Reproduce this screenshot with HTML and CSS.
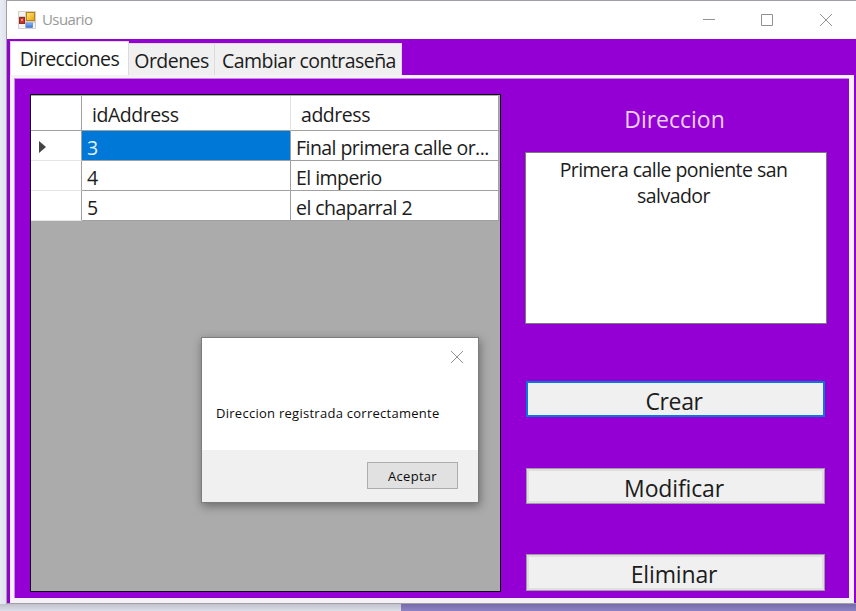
FILE: index.html
```html
<!DOCTYPE html>
<html lang="es">
<head>
<meta charset="utf-8">
<title>Usuario</title>
<link rel="stylesheet" href="styles.css">
</head>
<body>
<main class="window">
  <header class="titlebar">
    <svg class="app-icon" width="18" height="18" viewBox="0 0 18 18">
      <defs>
        <linearGradient id="gold" x1="0" y1="0" x2="1" y2="1"><stop offset="0" stop-color="#ffe58a"/><stop offset="1" stop-color="#e9a800"/></linearGradient>
        <linearGradient id="blue" x1="0" y1="0" x2="0" y2="1"><stop offset="0" stop-color="#8fbcff"/><stop offset="1" stop-color="#2c6fdc"/></linearGradient>
      </defs>
      <rect width="18" height="18" rx="1" fill="#d3cfcb"/>
      <rect x="1" y="1" width="6" height="4" fill="#f3f3f3"/>
      <rect x="1" y="13" width="6" height="4" fill="#f3f3f3"/>
      <rect x="15" y="12" width="2" height="5" fill="#f3f3f3"/>
      <rect x="1.5" y="6.500" width="5" height="6" fill="#c7382c" stroke="#962a24"/>
      <rect x="3" y="8" width="2" height="2" fill="#f08a76"/>
      <rect x="8.500" y="1.500" width="8" height="8" fill="url(#gold)" stroke="#b98212"/>
      <rect x="8" y="12" width="6.500" height="4.500" fill="url(#blue)" stroke="#5280c8" stroke-width=".6"/>
    </svg>
    <span class="title">Usuario</span>
    <div class="controls">
      <svg width="12" height="12" viewBox="0 0 12 12"><path d="M0 5.500H12"/></svg>
      <svg width="12" height="12" viewBox="0 0 12 12"><path d="M.5.5h11v11H.5z"/></svg>
      <svg width="12" height="12" viewBox="0 0 12 12"><path d="M0 0L12 12M12 0L0 12"/></svg>
    </div>
  </header>
  <div class="client">
    <nav class="tabs">
      <span class="tab active">Direcciones</span>
      <span class="tab ord">Ordenes</span>
      <span class="tab pass">Cambiar contraseña</span>
    </nav>
    <section class="page">
      <div class="grid-box">
        <div class="grid">
          <div class="cell head"></div><div class="cell head h-id">idAddress</div><div class="cell head">address</div>
          <div class="cell rowhead"><svg width="7" height="12" viewBox="0 0 7 12"><path d="M0 0L7 6L0 12z"/></svg></div><div class="cell selected">3</div><div class="cell">Final primera calle or...</div>
          <div class="cell rowhead"></div><div class="cell">4</div><div class="cell">El imperio</div>
          <div class="cell rowhead"></div><div class="cell">5</div><div class="cell">el chaparral 2</div>
        </div>
      </div>
      <aside class="form">
        <div class="label">Direccion</div>
        <div class="textbox">Primera calle poniente san<br>salvador</div>
        <div class="button primary">Crear</div>
        <div class="button">Modificar</div>
        <div class="button">Eliminar</div>
      </aside>
    </section>
  </div>
</main>
<div class="desktop"><div class="taskstrip"></div></div>
<div class="dialog">
  <div class="dialog-body">
    <svg class="dialog-close" width="12" height="12" viewBox="0 0 12 12"><path d="M0 0L12 12M12 0L0 12"/></svg>
    <span class="message">Direccion registrada correctamente</span>
  </div>
  <div class="dialog-foot"><div class="accept">Aceptar</div></div>
</div>
</body>
</html>
```
FILE: styles.css
```css
* { box-sizing: border-box; }
body {
  margin: 0;
  width: 856px;
  height: 611px;
  overflow: hidden;
  position: relative;
  background: linear-gradient(90deg, #e8ecf5, #dfe2eb 6px);
  font-family: "Open Sans", "Noto Sans", sans-serif;
  font-size: 19.5px;
  letter-spacing: -.55px;
  color: #1c1c1c;
  white-space: nowrap;
}
.window {
  width: 850px;
  height: 604px;
  margin-left: 6px;
  border: 1px solid #a2a0a6;
  border-right: 0;
  background: #fff;
}
.titlebar {
  display: flex;
  align-items: center;
  height: 38px;
  padding: 0 24px 0 11px;
}
.title { margin: -2px 0 0 6px; color: #999; font-size: 15px; letter-spacing: -.6px; }
.controls { display: flex; gap: 47px; margin-left: auto; }
.controls svg, .dialog-close { fill: none; stroke: #929292; stroke-width: 1; }
.controls svg:first-child { margin-right: -1px; }
.client { height: 564px; padding: 2px 2px 0 3px; background: #9400d3; }
.tabs { display: flex; align-items: flex-end; height: 34px; }
.tab {
  display: flex;
  align-items: center;
  justify-content: center;
  height: 32px;
  background: #f0f0f0;
  border: 1px solid #dcdcdc;
  border-bottom: 0;
}
.tab.active { width: 119px; height: 34px; background: #fff; padding-bottom: 1px; }
.tab.ord { width: 86px; border-left: 0; padding-top: 1px; }
.tab.pass { width: 187px; border-left: 0; padding: 1px 0 0 2px; }
.page {
  display: flex;
  height: 528px;
  border: solid #f4f2f6;
  border-width: 3px 5px 5px 4px;
  box-shadow: inset 0 1px #c98ae6, inset 1px 0 #c98ae6;
  background: #9400d3;
}
.grid-box {
  width: 471px;
  height: 498px;
  margin: 16px 24px 0 16px;
  border: 1px solid #100c14;
  background: #ababab;
  padding: 1px 1px 0 0;
}
.grid {
  display: grid;
  grid-template-columns: 51px 209px 208px;
  grid-template-rows: 35px 30px 30px 30px;
}
.cell {
  display: flex;
  align-items: center;
  padding: 4px 0 0 5px;
  background: #fff;
  border-right: 1px solid #a0a0a0;
  border-bottom: 1px solid #a0a0a0;
  overflow: hidden;
}
.head { padding-top: 2px; padding-left: 10px; letter-spacing: -.45px; }
.h-id { border-right-color: #e3e3e3; }
.rowhead { border-bottom-color: #e5e5e5; padding: 2px 0 0 8px; fill: #444; }
.selected { background: #0078d7; color: #e4f0fa; }
.form { width: 302px; }
.label { height: 74px; padding: 23px 3px 0 0; text-align: center; color: #ead0f5; font-size: 23px; letter-spacing: 0; line-height: 36px; }
.textbox {
  height: 172px;
  margin-bottom: 57px;
  padding: 4px 13px 4px 8px;
  border: 1px solid #7a7a7a;
  background: #fff;
  text-align: center;
  line-height: 26px;
}
.button {
  display: flex;
  align-items: center;
  justify-content: center;
  width: 299px;
  height: 36px;
  margin: 0 0 51px 1px;
  padding: 3px 3px 0 0;
  border: 1px solid #a29ba5;
  box-shadow: inset 0 0 0 2px #dfdfdf;
  background: #f0f0f0;
  font-size: 23px;
  letter-spacing: -.15px;
}
.button:last-child { margin-top: -1px; height: 37px; }
.primary { border: 2px solid #0a78d8; box-shadow: none; letter-spacing: -.35px; }
.desktop { height: 7px; background: linear-gradient(#c0c1cb, #dcdfe9); }
.taskstrip { height: 7px; margin-left: 401px; background: linear-gradient(#756ba8, #8d82c4); }
.dialog {
  position: absolute;
  left: 201px;
  top: 337px;
  width: 278px;
  height: 166px;
  border: 1px solid #7c7c7c;
  background: #fff;
  box-shadow: 1px 3px 9px rgba(0, 0, 0, .38);
  font-size: 13px;
  letter-spacing: .27px;
  color: #0c0c0c;
}
.dialog-body { display: flex; flex-direction: column; height: 112px; padding: 13px 15px 0 14px; }
.dialog-close { align-self: flex-end; flex: none; }
.message { margin-top: 41px; align-self: flex-start; }
.dialog-foot { height: 52px; padding: 12px 20px 0 0; background: #f0f0f0; }
.accept {
  display: flex;
  align-items: center;
  justify-content: center;
  width: 91px;
  height: 27px;
  margin-left: auto;
  border: 1px solid #adadad;
  background: #e1e1e1;
}
```
